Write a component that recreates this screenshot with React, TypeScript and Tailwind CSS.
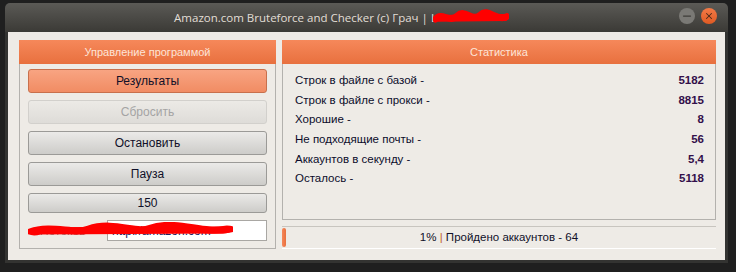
import { X, Minus } from 'lucide-react';

const stats = [
  { label: 'Строк в файле с базой -', value: '5182' },
  { label: 'Строк в файле с прокси -', value: '8815' },
  { label: 'Хорошие -', value: '8' },
  { label: 'Не подходящие почты -', value: '56' },
  { label: 'Аккаунтов в секунду -', value: '5,4' },
  { label: 'Осталось -', value: '5118' },
];

function Scribble({ className, thick = 7 }: { className?: string; thick?: number }) {
  return (
    <svg className={className} viewBox="0 0 100 20" preserveAspectRatio="none">
      <path
        d="M3 12 C 12 3, 22 17, 32 8 S 52 16, 62 7 S 84 15, 97 9"
        stroke="#ff0000"
        strokeWidth={thick}
        fill="none"
        strokeLinecap="round"
      />
      <path d="M5 11 L 95 10" stroke="#ff0000" strokeWidth={thick} strokeLinecap="round" />
    </svg>
  );
}

function Btn({ children, variant = 'default', h = 'h-6' }: { children: React.ReactNode; variant?: 'default' | 'accent' | 'disabled'; h?: string }) {
  const styles = {
    default: 'border-[#9b9a97] bg-gradient-to-b from-[#ebeae8] to-[#cdccc9] text-[#101028]',
    accent: 'border-[#c8704c] bg-gradient-to-b from-[#f8a482] to-[#f18c63] text-[#101028]',
    disabled: 'border-[#d2d0cc] bg-gradient-to-b from-[#eceae6] to-[#dedcd8] text-[#a4a4a4]',
  }[variant];
  return (
    <div className={`${h} w-full rounded-[3px] border flex items-center justify-center text-[12px] ${styles}`}>
      {children}
    </div>
  );
}

function GroupHeader({ title }: { title: string }) {
  return (
    <div className="h-6 shrink-0 bg-gradient-to-b from-[#f6885a] to-[#e8703e] flex items-center justify-center text-[11px] text-[#fde5d8]">
      {title}
    </div>
  );
}

export default function App() {
  return (
    <div className="w-[736px] h-[272px] bg-[#1f1f1f] pt-[3px] pl-[5px] overflow-hidden" style={{ fontFamily: '"Liberation Sans", Arial, sans-serif' }}>
      <div className="w-[723px] h-[260px] flex flex-col">
        {/* title bar */}
        <div className="h-[29px] shrink-0 rounded-t-[5px] bg-gradient-to-b from-[#5b5a56] to-[#3b3a36] relative flex items-center justify-center">
          <div className="flex items-center text-[11.5px] text-[#e2ded6] mr-[50px]" style={{ fontFamily: '"Open Sans", "Noto Sans", sans-serif' }}>
            <span>Amazon.com Bruteforce and Checker (c) Грач | L</span>
            <Scribble className="w-[76px] h-[17px] -ml-[4px]" thick={8} />
          </div>
          <div className="absolute right-[11px] top-[5px] flex items-center gap-[6px]">
            <div className="w-4 h-4 rounded-full bg-[#7a7975] flex items-center justify-center">
              <Minus className="w-3 h-3 text-[#3e3d39]" strokeWidth={2.5} />
            </div>
            <div className="w-4 h-4 rounded-full bg-gradient-to-b from-[#f37a46] to-[#df5a22] flex items-center justify-center">
              <X className="w-[10px] h-[10px] text-[#4a2a1a]" strokeWidth={2.5} />
            </div>
          </div>
        </div>

        {/* content */}
        <div className="flex-1 border-x-[3px] border-b-[3px] border-[#333331] bg-[#eeebe6] flex gap-[6px] pl-[11px] pr-[9px] pt-2">
          {/* left group */}
          <div className="w-[257px] h-[209px] flex flex-col">
            <GroupHeader title="Управление программой" />
            <div className="flex-1 border-x border-b border-[#b3b1ad] px-2 pt-[5px] flex flex-col gap-[7px]">
              <Btn variant="accent">Результаты</Btn>
              <Btn variant="disabled">Сбросить</Btn>
              <Btn>Остановить</Btn>
              <Btn>Пауза</Btn>
              <Btn h="h-5">150</Btn>
              <div className="relative flex items-center h-[21px]">
                <span className="w-[79px] text-[12px] text-[#8a8a8a] blur-[0.6px] pl-3">Потоков</span>
                <div className="flex-1 h-full bg-white border border-[#a9a7a3] flex items-center pl-1 text-[12px] text-[#202060]">
                  http://amazon.com
                </div>
                <Scribble className="absolute left-0 top-[2px] w-[205px] h-[16px]" thick={9} />
              </div>
            </div>
          </div>

          {/* right group */}
          <div className="flex-1 flex flex-col">
            <div className="h-[180px] flex flex-col">
              <GroupHeader title="Статистика" />
              <div className="flex-1 border-x border-b border-[#b3b1ad] pl-3 pr-[11px] pt-[7px]">
                {stats.map((s) => (
                  <div key={s.label} className="h-[19.6px] flex items-center justify-between text-[11.5px]">
                    <span className="text-[#0b0b2a]">{s.label}</span>
                    <span className="font-bold text-[#33104a]">{s.value}</span>
                  </div>
                ))}
              </div>
            </div>
            <div className="mt-[6px] h-[23px] border-t border-[#c8c5bf] border-b border-b-white relative flex items-center justify-center text-[11.5px] text-[#101028]">
              <div className="absolute left-0 top-[1px] bottom-[1px] w-[4px] rounded-[2px] bg-gradient-to-r from-[#f6885a] to-[#e8703e]" />
              <span>
                1% <span className="text-[#c0652a]">|</span> Пройдено аккаунтов - 64
              </span>
            </div>
          </div>
        </div>
      </div>
    </div>
  );
}
